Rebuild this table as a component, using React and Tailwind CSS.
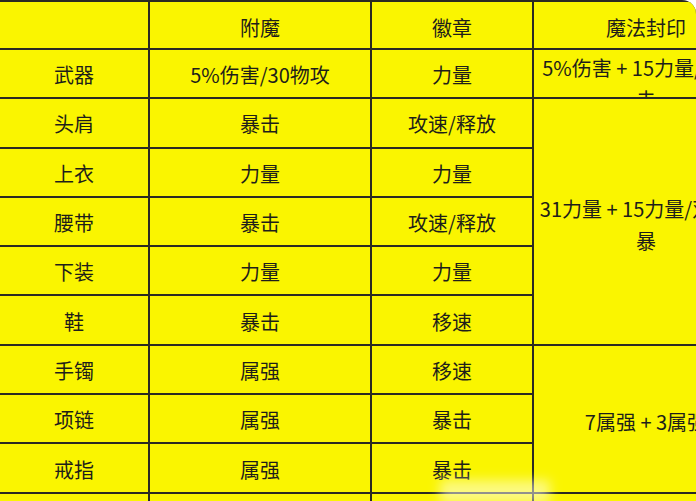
import React from 'react';

const rows = [
  ['武器', '5%伤害/30物攻', '力量'],
  ['头肩', '暴击', '攻速/释放'],
  ['上衣', '力量', '力量'],
  ['腰带', '暴击', '攻速/释放'],
  ['下装', '力量', '力量'],
  ['鞋', '暴击', '移速'],
  ['手镯', '属强', '移速'],
  ['项链', '属强', '暴击'],
  ['戒指', '属强', '暴击'],
  ['', '', ''],
];

// seal column: which row starts a block, and how many rows it spans
const seals = {
  0: { span: 'row-span-1', lines: ['5%伤害 + 15力量/暴击/', '击'], top: true },
  1: { span: 'row-span-5', lines: ['31力量 + 15力量/双攻速', '暴'] },
  6: { span: 'row-span-3', lines: ['7属强 + 3属强'] },
  9: { span: 'row-span-1', lines: [] },
};

function Cell({ children }) {
  return (
    <div className="bg-[#faf500] flex items-center justify-center whitespace-nowrap overflow-hidden">
      {children}
    </div>
  );
}

export default function App() {
  return (
    <div
      className="relative w-[696px] h-[501px] overflow-hidden bg-white rounded-tr-[14px] text-[20px] text-[#1e1e1a]"
      style={{ fontFamily: '"Noto Sans CJK SC", "Noto Sans", sans-serif' }}
    >
      <div className="grid grid-cols-[148px_220px_160px_224px] grid-rows-[46px_repeat(10,47.3px)] gap-[2px] pt-[2px] bg-[#2a2a22] w-[758px]">
        {/* header */}
        <Cell />
        <Cell><span className="pt-[5px]">附魔</span></Cell>
        <Cell><span className="pt-[5px]">徽章</span></Cell>
        <Cell><span className="pt-[5px]">魔法封印</span></Cell>

        {rows.map((r, i) => (
          <React.Fragment key={i}>
            <Cell><span className="pt-[3px]">{r[0]}</span></Cell>
            <Cell><span className="pt-[3px]">{r[1]}</span></Cell>
            <Cell><span className="pt-[3px]">{r[2]}</span></Cell>
            {seals[i] && (
              <div
                className={`${seals[i].span} col-start-4 bg-[#faf500] overflow-hidden whitespace-pre flex flex-col items-center leading-[32px] ${
                  seals[i].top ? 'justify-start pt-[2px]' : 'justify-center pt-[6px]'
                }`}
              >
                {seals[i].lines.map((l, k) => (
                  <div key={k}>{l}</div>
                ))}
              </div>
            )}
          </React.Fragment>
        ))}
      </div>

      {/* washed out smear near the bottom */}
      <div className="absolute left-[440px] top-[480px] w-[110px] h-[24px] bg-white/50 blur-[6px]" />
    </div>
  );
}
